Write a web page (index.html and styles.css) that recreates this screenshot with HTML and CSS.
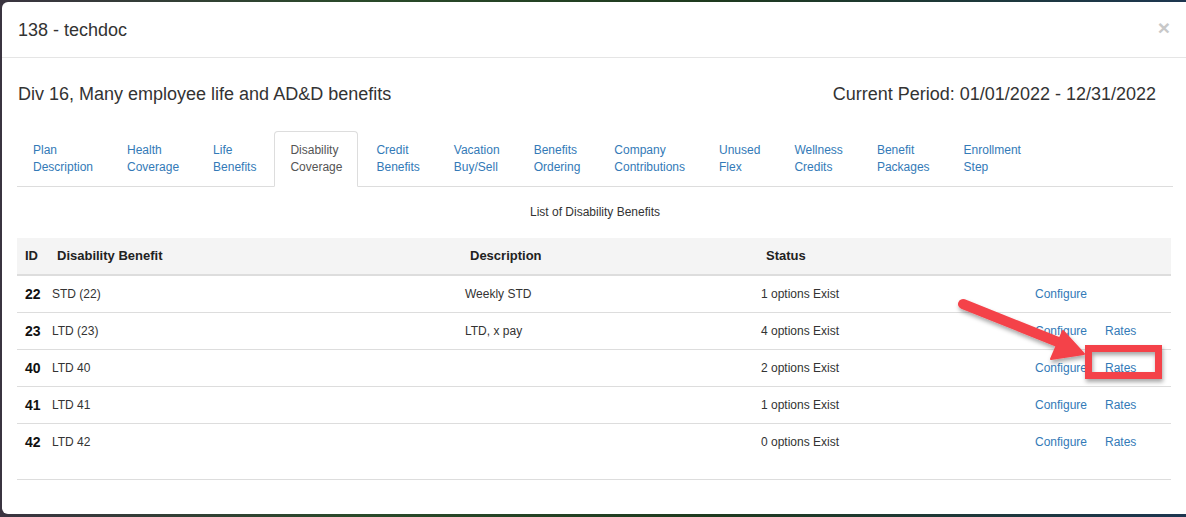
FILE: index.html
```html
<!DOCTYPE html>
<html>
<head>
<meta charset="utf-8">
<link rel="stylesheet" href="styles.css">
</head>
<body>
<div class="backdrop">
  <div class="modal">
    <div class="modal-header">
      <span class="modal-title">138 - techdoc</span>
      <span class="close">&times;</span>
    </div>
    <div class="modal-body">
      <div class="title-row">
        <span>Div 16, Many employee life and AD&amp;D benefits</span>
        <span>Current Period: 01/01/2022 - 12/31/2022</span>
      </div>
      <ul class="tabs">
        <li><a>Plan<br>Description</a></li>
        <li><a>Health<br>Coverage</a></li>
        <li><a>Life<br>Benefits</a></li>
        <li class="active"><a>Disability<br>Coverage</a></li>
        <li><a>Credit<br>Benefits</a></li>
        <li><a>Vacation<br>Buy/Sell</a></li>
        <li><a>Benefits<br>Ordering</a></li>
        <li><a>Company<br>Contributions</a></li>
        <li><a>Unused<br>Flex</a></li>
        <li><a>Wellness<br>Credits</a></li>
        <li><a>Benefit<br>Packages</a></li>
        <li><a>Enrollment<br>Step</a></li>
      </ul>
      <div class="caption">List of Disability Benefits</div>
      <table class="grid">
        <colgroup>
          <col class="c-id"><col class="c-name"><col class="c-desc"><col class="c-status"><col class="c-conf"><col>
        </colgroup>
        <thead>
          <tr><th class="th-id">ID</th><th>Disability Benefit</th><th>Description</th><th>Status</th><th></th><th></th></tr>
        </thead>
        <tbody>
          <tr><td class="id">22</td><td>STD (22)</td><td>Weekly STD</td><td>1 options Exist</td><td><a>Configure</a></td><td></td></tr>
          <tr><td class="id">23</td><td>LTD (23)</td><td>LTD, x pay</td><td>4 options Exist</td><td><a>Configure</a></td><td><a>Rates</a></td></tr>
          <tr><td class="id">40</td><td>LTD 40</td><td></td><td>2 options Exist</td><td><a>Configure</a></td><td><a>Rates</a></td></tr>
          <tr><td class="id">41</td><td>LTD 41</td><td></td><td>1 options Exist</td><td><a>Configure</a></td><td><a>Rates</a></td></tr>
          <tr class="last"><td class="id">42</td><td>LTD 42</td><td></td><td>0 options Exist</td><td><a>Configure</a></td><td><a>Rates</a></td></tr>
        </tbody>
      </table>
    </div>
  </div>
  <svg class="annotation" width="1186" height="517" viewBox="0 0 1186 517">
    <defs>
      <filter id="sh" x="-20%" y="-20%" width="140%" height="160%">
        <feDropShadow dx="1" dy="3" stdDeviation="2" flood-color="#000" flood-opacity="0.35"/>
      </filter>
    </defs>
    <g filter="url(#sh)" fill="#f4424a" stroke="#f4424a">
      <line x1="963" y1="304" x2="1058" y2="342" stroke-width="10" stroke-linecap="round"/>
      <polygon points="1084,354 1063,331 1051,359" stroke-width="2" stroke-linejoin="round"/>
      <rect x="1088.5" y="348.5" width="70" height="27" fill="none" stroke-width="7"/>
    </g>
  </svg>
</div>
</body>
</html>
```

FILE: styles.css
```css
html, body {
  margin: 0;
  padding: 0;
}
body {
  background: #2b3440;
  font-family: "Liberation Sans", Arial, sans-serif;
  color: #333;
  width: 1186px;
  height: 517px;
  overflow: hidden;
}
.backdrop {
  position: relative;
  width: 1186px;
  height: 517px;
  padding: 2px 0 0 2px;
  box-sizing: border-box;
  background: linear-gradient(90deg, #3a3440 0, #2a4a2a 30%, #1e3a1e 60%, #1d3650 100%);
}
.modal {
  background: #fff;
  border-radius: 6px;
  width: 1190px;
  height: 512px;
  box-sizing: border-box;
}
.modal-header {
  display: flex;
  justify-content: space-between;
  align-items: center;
  padding: 15px 19px 15px 16px;
  border-bottom: 1px solid #e5e5e5;
  height: 56px;
  box-sizing: border-box;
}
.modal-title {
  font-size: 18px;
  line-height: 26px;
}
.close {
  font-size: 21px;
  font-weight: bold;
  color: #c8c8c8;
  line-height: 20px;
  margin-top: -4px;
  margin-right: 3px;
}
.modal-body {
  padding: 23px 19px 0 15px;
}
.title-row {
  display: flex;
  justify-content: space-between;
  font-size: 18px;
  line-height: 26px;
  padding: 0 17px 0 1px;
}
.tabs {
  list-style: none;
  margin: 24px 0 0 0;
  padding: 0;
  display: flex;
  border-bottom: 1px solid #ddd;
  font-size: 12px;
  line-height: 17px;
}
.tabs li {
  margin-bottom: -1px;
}
.tabs a {
  display: block;
  padding: 10px 15px;
  margin-right: 2px;
  border: 1px solid transparent;
  border-radius: 4px 4px 0 0;
  color: #337ab7;
}
.tabs li.active a {
  color: #555;
  background: #fff;
  border-color: #ddd #ddd transparent #ddd;
}
.caption {
  text-align: center;
  font-size: 12px;
  line-height: 18px;
  padding: 16px 0 17px;
  color: #333;
}
.grid {
  width: 1154px;
  border-collapse: collapse;
  table-layout: fixed;
  font-size: 12px;
}
.c-id { width: 27px; }
.c-name { width: 413px; }
.c-desc { width: 296px; }
.c-status { width: 274px; }
.c-conf { width: 70px; }
.grid th {
  background: #f4f4f4;
  text-align: left;
  font-size: 13px;
  font-weight: bold;
  color: #222;
  padding: 8px 8px 8px 13px;
  line-height: 20px;
  border-bottom: 2px solid #ddd;
}
.grid th.th-id {
  padding-left: 8px;
}
.grid td {
  padding: 8px;
  line-height: 20px;
  vertical-align: top;
  border-bottom: 1px solid #ddd;
  white-space: nowrap;
}
.grid td.id {
  font-weight: bold;
  font-size: 14px;
  color: #111;
}
.grid tr.last td {
  padding-bottom: 27px;
}
.grid a {
  color: #337ab7;
}
.annotation {
  position: absolute;
  left: 0;
  top: 0;
  pointer-events: none;
}
```
